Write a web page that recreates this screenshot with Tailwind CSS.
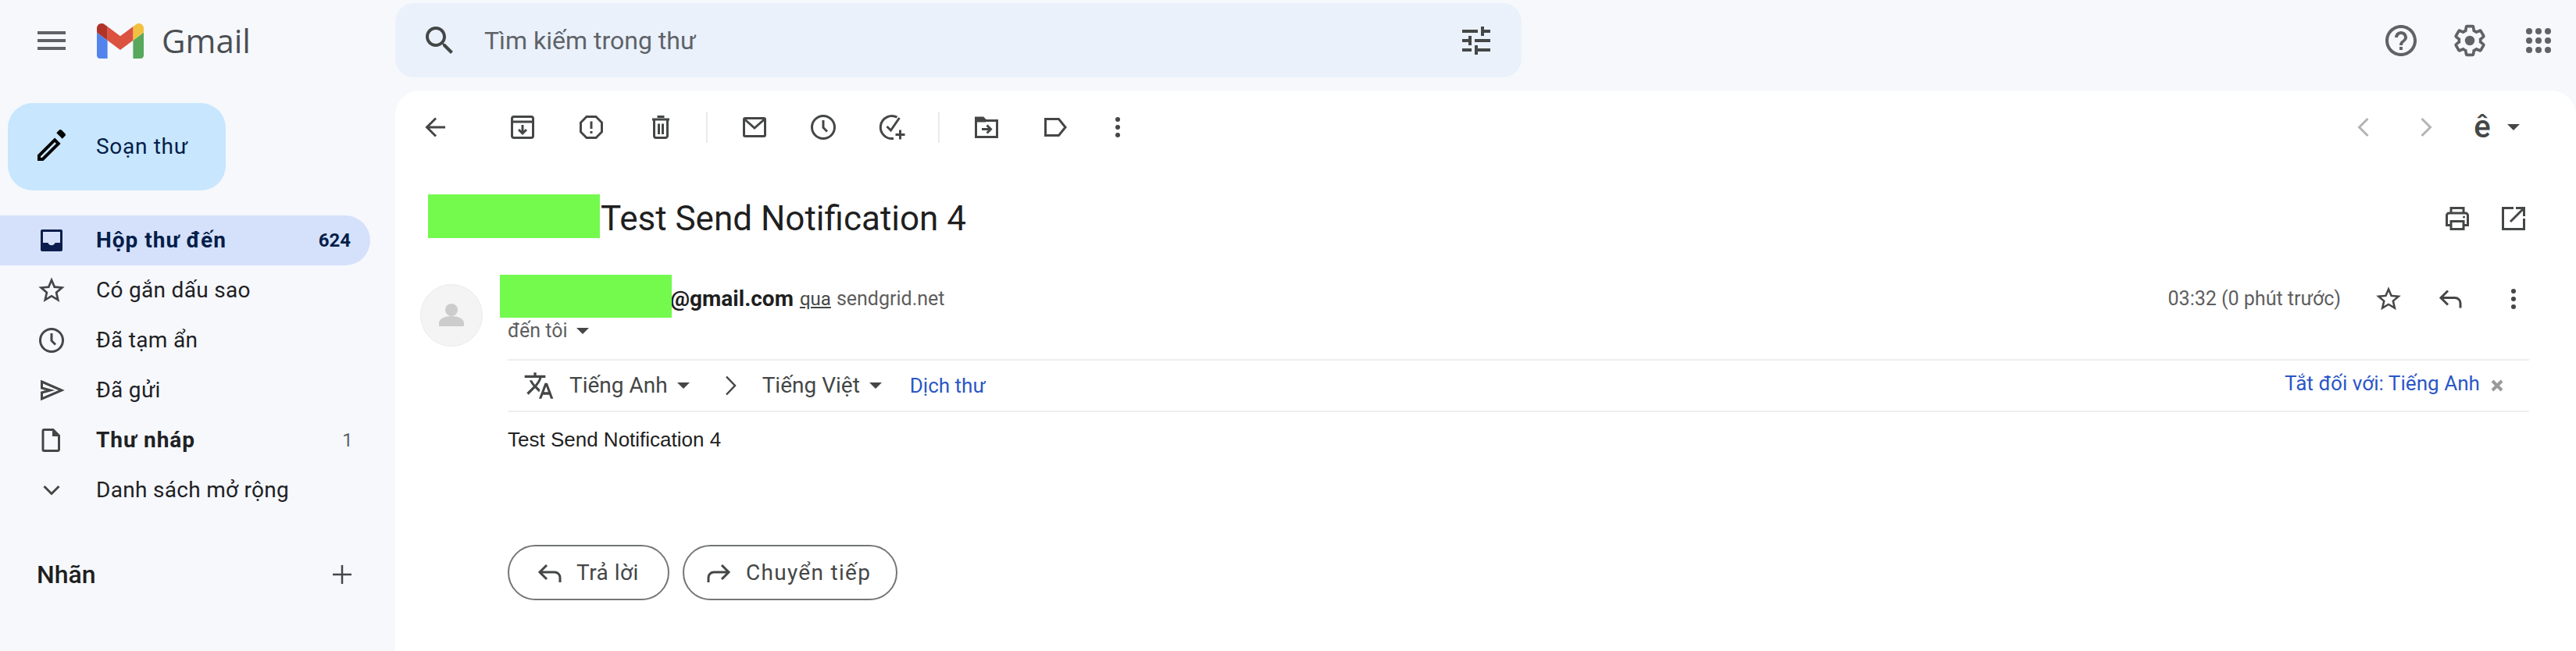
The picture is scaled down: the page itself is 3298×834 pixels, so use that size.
<!DOCTYPE html>
<html lang="vi">
<head>
  <meta charset="UTF-8">
  <title>Gmail</title>
  <script src="https://cdn.jsdelivr.net/npm/@tailwindcss/browser@4"></script>
</head>
<body class="font-['Roboto',sans-serif] bg-[#f6f8fc]">
<div class="flex w-[3298px] h-[834px] overflow-hidden text-[#1f1f1f]">

  <!-- Sidebar -->
  <aside class="w-[506px] shrink-0">
    <div class="h-[116px] flex items-center pl-[42px] pb-[12px]">
      <svg class="size-12 text-[#5f6368]" viewBox="0 0 24 24" fill="currentColor"><path d="M3 18h18v-2H3v2zm0-5h18v-2H3v2zm0-7v2h18V6H3z"/></svg>
      <svg class="ml-[34px] w-[60px] h-[45px]" viewBox="52 42 88 66"><path fill="#5384ed" d="M58 108h14V74L52 59v43c0 3.32 2.69 6 6 6"/><path fill="#57a85c" d="M120 108h14c3.32 0 6-2.69 6-6V59l-20 15"/><path fill="#f2c040" d="M120 48v26l20-15v-8c0-7.42-8.47-11.65-14.4-7.2"/><path fill="#dc5241" d="M72 74V48l24 18 24-18v26L96 92"/><path fill="#b03327" d="M52 51v8l20 15V48l-5.6-4.2c-5.94-4.45-14.4-.22-14.4 7.2"/></svg>
      <span class="ml-[23px] text-[42px] leading-none text-[#4b4e52] font-['Open_Sans']">Gmail</span>
    </div>

    <button class="ml-[10px] mt-[16px] w-[279px] h-[112px] rounded-[32px] bg-[#c8e6fd] flex items-center pl-[32px]">
      <svg class="size-12" viewBox="0 0 24 24" fill="#000"><path d="M3 17.25V21h3.75L17.81 9.94l-3.75-3.75L3 17.25zM5.92 19H5v-.92l9.06-9.06.92.92L5.92 19zM20.71 5.04c.39-.39.39-1.02 0-1.41l-2.34-2.34c-.2-.2-.45-.29-.71-.29s-.51.1-.7.29l-1.83 1.83 3.75 3.75 1.83-1.83z"/></svg>
      <span class="ml-[33px] text-[28px] tracking-[0.7px] text-[#041e49]">Soạn thư</span>
    </button>

    <nav class="mt-[32px] text-[28px] text-[#202124] tracking-[0.3px]">
      <div class="w-[474px] h-16 rounded-r-[32px] bg-[#d5e1fb] flex items-center pl-[46px] pr-[25px] font-bold text-[#041e49]">
        <svg class="size-10" viewBox="0 0 20 20" fill="#0b1d4d"><path fill-rule="evenodd" d="M4 3h12a1 1 0 011 1v12a1 1 0 01-1 1H4a1 1 0 01-1-1V4a1 1 0 011-1zm.5 1.5v7h3.2c.3 1 1.2 1.6 2.3 1.6s2-.6 2.3-1.6h3.2v-7z"/></svg>
        <span class="ml-[37px] tracking-[1px]">Hộp thư đến</span>
        <span class="ml-auto text-[24px] tracking-normal">624</span>
      </div>
      <div class="w-[474px] h-16 flex items-center pl-[46px] pr-[25px]">
        <svg class="size-10" viewBox="0 0 24 24" fill="#444746"><path d="M22 9.24l-7.19-.62L12 2 9.19 8.63 2 9.24l5.46 4.73L5.82 21 12 17.27 18.18 21l-1.63-7.03L22 9.24zM12 15.4l-3.76 2.27 1-4.28-3.32-2.88 4.38-.38L12 6.1l1.71 4.04 4.38.38-3.32 2.88 1 4.28L12 15.4z"/></svg>
        <span class="ml-[37px]">Có gắn dấu sao</span>
      </div>
      <div class="w-[474px] h-16 flex items-center pl-[46px] pr-[25px]">
        <svg class="size-10" viewBox="0 0 20 20" fill="none" stroke="#444746" stroke-width="1.5"><circle cx="10" cy="10" r="7.25"/><path d="M10 5.5v4.75l2.5 2.5"/></svg>
        <span class="ml-[37px]">Đã tạm ẩn</span>
      </div>
      <div class="w-[474px] h-16 flex items-center pl-[46px] pr-[25px]">
        <svg class="size-10" viewBox="0 0 20 20" fill="none" stroke="#444746" stroke-width="1.5"><path d="M3.75 4.5L16.5 10 3.75 15.5v-4l5.5-1.5-5.5-1.5z"/></svg>
        <span class="ml-[37px]">Đã gửi</span>
      </div>
      <div class="w-[474px] h-16 flex items-center pl-[46px] pr-[25px]">
        <svg class="size-10" viewBox="0 0 20 20" fill="none" stroke="#444746" stroke-width="1.5"><path d="M5.25 3.25h5.75l3.75 3.75v9a.75.75 0 01-.75.75H5.25a.75.75 0 01-.75-.75V4a.75.75 0 01.75-.75z"/><path fill="#444746" stroke="none" d="M10.5 3.5h1l3 3v1h-4z"/></svg>
        <span class="ml-[37px] font-bold tracking-[1px]">Thư nháp</span>
        <span class="ml-auto -mr-[3px] text-[24px] text-[#5f6368]">1</span>
      </div>
      <div class="w-[474px] h-16 flex items-center pl-[46px] pr-[25px]">
        <svg class="size-10" viewBox="0 0 20 20" fill="none" stroke="#444746" stroke-width="1.5"><path d="M5.25 7.5L10 12.25l4.75-4.75"/></svg>
        <span class="ml-[37px]">Danh sách mở rộng</span>
      </div>
    </nav>

    <div class="w-[474px] h-16 mt-[44px] flex items-center pl-[47px] pr-[16px]">
      <span class="text-[32px] font-medium">Nhãn</span>
      <svg class="ml-auto size-10" viewBox="0 0 20 20" fill="none" stroke="#444746" stroke-width="1.25"><path d="M10 4v12M4 10h12"/></svg>
    </div>
  </aside>

  <!-- Main column -->
  <main class="flex-1 min-w-0 flex flex-col">
    <header class="h-[116px] shrink-0 flex items-start pt-1 pr-[4px]">
      <div class="w-[1442px] h-[95px] rounded-[24px] bg-[#eaf1fb] flex items-center pl-[33px] pr-[34px]">
        <svg class="size-12" viewBox="0 0 24 24" fill="#444746"><path d="M15.5 14h-.79l-.28-.27C15.41 12.59 16 11.11 16 9.5 16 5.91 13.09 3 9.5 3S3 5.91 3 9.5 5.91 16 9.5 16c1.61 0 3.09-.59 4.23-1.57l.27.28v.79l5 4.99L20.49 19l-4.99-5zm-6 0C7.01 14 5 11.99 5 9.5S7.01 5 9.5 5 14 7.01 14 9.5 11.99 14 9.5 14z"/></svg>
        <span class="ml-[33px] text-[32px] text-[#5f6368]">Tìm kiếm trong thư</span>
        <svg class="ml-auto size-12" viewBox="0 0 24 24" fill="#444746"><path d="M3 17v2h6v-2H3zM3 5v2h10V5H3zm10 16v-2h8v-2h-8v-2h-2v6h2zM7 9v2H3v2h4v2h2V9H7zm14 4v-2H11v2h10zm-6-4h2V7h4V5h-4V3h-2v6z"/></svg>
      </div>
      <div class="ml-auto h-[95px] flex items-center">
        <div class="w-[88px] flex justify-center"><svg class="size-12" viewBox="0 0 24 24" fill="#5f6368"><path d="M11 18h2v-2h-2v2zm1-16C6.48 2 2 6.48 2 12s4.48 10 10 10 10-4.48 10-10S17.52 2 12 2zm0 18c-4.41 0-8-3.59-8-8s3.59-8 8-8 8 3.59 8 8-3.59 8-8 8zm0-14c-2.21 0-4 1.79-4 4h2c0-1.1.9-2 2-2s2 .9 2 2c0 2-3 1.75-3 5h2c0-2.25 3-2.5 3-5 0-2.21-1.79-4-4-4z"/></svg></div>
        <div class="w-[88px] flex justify-center"><svg class="size-[44px]" viewBox="0 0 24 24" fill="none" stroke="#5f6368" stroke-width="2"><path d="M19.43 12.98c.04-.32.07-.64.07-.98s-.03-.66-.07-.98l2.11-1.65c.19-.15.24-.42.12-.64l-2-3.46c-.12-.22-.39-.3-.61-.22l-2.49 1c-.52-.4-1.08-.73-1.69-.98l-.38-2.65C14.46 2.18 14.25 2 14 2h-4c-.25 0-.46.18-.49.42l-.38 2.65c-.61.25-1.17.59-1.69.98l-2.49-1c-.23-.09-.49 0-.61.22l-2 3.46c-.13.22-.07.49.12.64l2.11 1.65c-.04.32-.07.65-.07.98s.03.66.07.98l-2.11 1.65c-.19.15-.24.42-.12.64l2 3.46c.12.22.39.3.61.22l2.49-1c.52.4 1.08.73 1.69.98l.38 2.65c.03.24.24.42.49.42h4c.25 0 .46-.18.49-.42l.38-2.65c.61-.25 1.17-.59 1.69-.98l2.49 1c.23.09.49 0 .61-.22l2-3.46c.12-.22.07-.49-.12-.64l-2.11-1.65z"/><circle cx="12" cy="12" r="3.4" fill="#5f6368" stroke="none"/></svg></div>
        <div class="w-[88px] flex justify-center"><svg class="size-12" viewBox="0 0 48 48" fill="#5f6368"><circle cx="12" cy="12" r="4"/><circle cx="24" cy="12" r="4"/><circle cx="36" cy="12" r="4"/><circle cx="12" cy="24" r="4"/><circle cx="24" cy="24" r="4"/><circle cx="36" cy="24" r="4"/><circle cx="12" cy="36" r="4"/><circle cx="24" cy="36" r="4"/><circle cx="36" cy="36" r="4"/></svg></div>
      </div>
    </header>

    <section class="flex-1 bg-white rounded-t-[32px]">
      <!-- Toolbar -->
      <div class="h-[94px] flex items-center pl-[8px] pr-[72px]">
        <div class="w-[88px] flex justify-center"><svg class="size-10" viewBox="0 0 20 20" fill="none" stroke="#444746" stroke-width="1.5"><path d="M16 10H4.75M10 4.25L4.25 10 10 15.75"/></svg></div>
        <div class="w-[88px] ml-[23px] flex justify-center"><svg class="size-10" viewBox="0 0 20 20" fill="none" stroke="#444746" stroke-width="1.5"><rect x="3.25" y="3.25" width="13.5" height="13.5" rx="1.25"/><path d="M3.25 6.5h13.5M10 8.5v5.25M7.5 11.5l2.5 2.5 2.5-2.5"/></svg></div>
        <div class="w-[88px] flex justify-center"><svg class="size-10" viewBox="0 0 20 20" fill="none" stroke="#444746" stroke-width="1.5"><path d="M7 3.25h6L16.75 7v6L13 16.75H7L3.25 13V7z"/><path d="M10 6.25v4.75M10 12.5v1.5"/></svg></div>
        <div class="w-[88px] ml-[1px] flex justify-center"><svg class="size-10" viewBox="0 0 20 20" fill="none" stroke="#444746" stroke-width="1.5"><path d="M5.75 5.5v10a1.25 1.25 0 001.25 1.25h6a1.25 1.25 0 001.25-1.25v-10M4.5 5h11M7.75 3.25h4.5M8.75 7.75v6.75M11.25 7.75v6.75"/></svg></div>
        <div class="w-[2px] h-10 ml-[14px] bg-[#e8eaed]"></div>
        <div class="w-[88px] ml-[16px] flex justify-center"><svg class="size-10" viewBox="0 0 20 20" fill="none" stroke="#444746" stroke-width="1.5"><rect x="3.25" y="4.25" width="13.5" height="11.5" rx=".75"/><path d="M3.5 4.75L10 10.5l6.5-5.75"/></svg></div>
        <div class="w-[88px] flex justify-center"><svg class="size-10" viewBox="0 0 20 20" fill="none" stroke="#444746" stroke-width="1.5"><circle cx="10" cy="10" r="7.25"/><path d="M10 5.5v4.75l2.5 2.5"/></svg></div>
        <div class="w-[88px] flex justify-center"><svg class="size-10" viewBox="0 0 20 20" fill="none" stroke="#444746" stroke-width="1.5"><path d="M13.25 3.6A7.25 7.25 0 1 0 11 17.2M6.75 9.5l2.5 2.5 5.5-8M15.25 11.75v6M12.25 14.75h6"/></svg></div>
        <div class="w-[2px] h-10 ml-[15px] bg-[#e8eaed]"></div>
        <div class="w-[88px] ml-[16px] flex justify-center"><svg class="size-10" viewBox="0 0 20 20" fill="none" stroke="#444746" stroke-width="1.5"><path d="M3.25 16.25V4h4.5l1.75 1.75h7.25v10.5z"/><path fill="#444746" stroke="none" d="M3.25 4h4.5l1.75 1.75v1H3.25z"/><path d="M7 11.25h5.75M10.25 8.75l2.5 2.5-2.5 2.5"/></svg></div>
        <div class="w-[88px] flex justify-center"><svg class="size-10" viewBox="0 0 20 20" fill="none" stroke="#444746" stroke-width="1.5"><path d="M3.75 4.75h8.5L16.5 10l-4.25 5.25h-8.5z"/></svg></div>
        <div class="w-[72px] flex justify-center"><svg class="size-10" viewBox="0 0 20 20" fill="#444746"><circle cx="10" cy="5" r="1.5"/><circle cx="10" cy="10" r="1.5"/><circle cx="10" cy="15" r="1.5"/></svg></div>

        <div class="ml-auto w-[80px] flex justify-center"><svg class="size-10" viewBox="0 0 20 20" fill="none" stroke="#b4b4b4" stroke-width="1.5"><path d="M12.75 4.5L7.25 10l5.5 5.5"/></svg></div>
        <div class="w-[80px] flex justify-center"><svg class="size-10" viewBox="0 0 20 20" fill="none" stroke="#b4b4b4" stroke-width="1.5"><path d="M7.25 4.5l5.5 5.5-5.5 5.5"/></svg></div>
        <div class="w-[64px] flex justify-center text-[40px] leading-none font-medium text-[#444746]">ê</div>
        <svg class="w-4 h-2" viewBox="0 0 16 8" fill="#444746"><path d="M0 0h16L8 8z"/></svg>
      </div>

      <!-- Subject -->
      <div class="h-[140px] flex items-center pl-[42px] pr-[44px]">
        <div class="w-[220px] h-[56px] mb-[6px] bg-[#74f94d]"></div>
        <h1 class="ml-[1px] text-[44px] text-[#1f1f1f]">Test Send Notification 4</h1>
        <div class="ml-auto w-[72px] flex justify-center"><svg class="size-10" viewBox="0 0 20 20" fill="none" stroke="#444746" stroke-width="1.5"><path d="M6 6.5V3.25h8V6.5M6 14.25H3.25V8a1.5 1.5 0 011.5-1.5h10.5a1.5 1.5 0 011.5 1.5v6.25H14"/><path d="M6 11.75h8v5H6z"/><circle cx="14.25" cy="9" r=".75" fill="#444746" stroke="none"/></svg></div>
        <div class="w-[72px] flex justify-center"><svg class="size-10" viewBox="0 0 20 20" fill="none" stroke="#444746" stroke-width="1.5"><path d="M10 3.25H3.25v13.5h13.5V10M11.5 3.25h5.25V8.5M16.5 3.5L8 12"/></svg></div>
      </div>

      <!-- Message -->
      <div class="flex pl-[32px] pr-[60px]">
        <div class="size-20 mt-[14px] shrink-0 rounded-full bg-[#f4f4f4] border border-[#ebebeb] flex items-center justify-center">
          <svg class="size-10" viewBox="0 0 40 40" fill="#cccccc"><circle cx="20" cy="13" r="8"/><path d="M4 34v-4c0-6 8-9 16-9s16 3 16 9v4z"/></svg>
        </div>
        <div class="flex-1 ml-[32px] pt-[8px] min-w-0">
          <div class="relative h-[50px] flex items-center pl-[208px]">
            <div class="absolute left-[-10px] top-[-6px] w-[220px] h-[55px] bg-[#74f94d]"></div>
            <span class="text-[28px] font-bold">@gmail.com</span>
            <span class="ml-[8px] text-[24px] text-[#444746] underline">qua</span>
            <span class="ml-[7px] text-[25px] text-[#5e5e5e]">sendgrid.net</span>
            <span class="ml-auto mr-[21px] text-[25px] text-[#5e5e5e]">03:32 (0 phút trước)</span>
            <div class="w-[80px] flex justify-center"><svg class="size-[38px]" viewBox="0 0 24 24" fill="#444746"><path d="M22 9.24l-7.19-.62L12 2 9.19 8.63 2 9.24l5.46 4.73L5.82 21 12 17.27 18.18 21l-1.63-7.03L22 9.24zM12 15.4l-3.76 2.27 1-4.28-3.32-2.88 4.38-.38L12 6.1l1.71 4.04 4.38.38-3.32 2.88 1 4.28L12 15.4z"/></svg></div>
            <div class="w-[80px] flex justify-center"><svg class="size-10" viewBox="0 0 20 20" fill="none" stroke="#444746" stroke-width="1.5"><path d="M8 4.75L3.5 9.25 8 13.75M4 9.25h8.5a3.5 3.5 0 013.5 3.5v3"/></svg></div>
            <div class="w-[80px] -mr-[20px] flex justify-center"><svg class="size-10" viewBox="0 0 20 20" fill="#444746"><circle cx="10" cy="5" r="1.5"/><circle cx="10" cy="10" r="1.5"/><circle cx="10" cy="15" r="1.5"/></svg></div>
          </div>
          <div class="h-8 flex items-center text-[25px] text-[#5e5e5e]">
            đến tôi
            <svg class="ml-[12px] w-4 h-2" viewBox="0 0 16 8" fill="#444746"><path d="M0 0h16L8 8z"/></svg>
          </div>

          <!-- Translate bar -->
          <div class="mt-[20px] h-[68px] border-y-2 border-[#eeeeee] flex items-center pl-[20px] pr-[33px] text-[28px] text-[#444746]">
            <svg class="size-10" viewBox="0 0 24 24" fill="#444746"><path d="M12.87 15.07l-2.54-2.51.03-.03c1.74-1.94 2.98-4.17 3.71-6.53H17V4h-7V2H8v2H1v1.99h11.17C11.5 7.92 10.44 9.75 9 11.35 8.07 10.32 7.3 9.19 6.69 8h-2c.73 1.63 1.73 3.17 2.98 4.56l-5.09 5.02L4 19l5-5 3.11 3.11.76-2.04zM18.5 10h-2L12 22h2l1.12-3h4.75L21 22h2l-4.5-12zm-2.62 7l1.62-4.33L19.12 17h-3.24z"/></svg>
            <span class="ml-[19px]">Tiếng Anh</span>
            <svg class="ml-[12px] w-4 h-2" viewBox="0 0 16 8" fill="#444746"><path d="M0 0h16L8 8z"/></svg>
            <svg class="ml-[45px] w-[15px] h-[26px]" viewBox="0 0 15 26" fill="none" stroke="#444746" stroke-width="2.5"><path d="M2 1.5L13 13 2 24.5"/></svg>
            <span class="ml-[33px]">Tiếng Việt</span>
            <svg class="ml-[12px] w-4 h-2" viewBox="0 0 16 8" fill="#444746"><path d="M0 0h16L8 8z"/></svg>
            <span class="ml-[36px] text-[26px] text-[#2a56c6]">Dịch thư</span>
            <span class="ml-auto mb-[6px] text-[26px] tracking-[0.05px] text-[#2a56c6]">Tắt đối với: Tiếng Anh</span>
            <svg class="ml-[14px] size-4" viewBox="0 0 16 16" fill="none" stroke="#999" stroke-width="4"><path d="M2 2l12 12M14 2L2 14"/></svg>
          </div>

          <p class="mt-[20px] h-[30px] leading-[30px] text-[26px] font-['Liberation_Sans'] text-[#222222]">Test Send Notification 4</p>

          <!-- Actions -->
          <div class="mt-[120px] flex gap-[17px] text-[28px] text-[#444746]">
            <button class="w-[207px] h-[71px] rounded-full border-2 border-[#747775] flex items-center pl-[36px]">
              <svg class="size-8" viewBox="0 0 16 16" fill="none" stroke="#444746" stroke-width="1.5"><path d="M6 3L1.5 7.5 6 12M2 7.5h9a3.5 3.5 0 013.5 3.5v3"/></svg>
              <span class="ml-[18px] tracking-[0.5px]">Trả lời</span>
            </button>
            <button class="w-[275px] h-[71px] rounded-full border-2 border-[#747775] flex items-center pl-[28px]">
              <svg class="size-8" viewBox="0 0 16 16" fill="none" stroke="#444746" stroke-width="1.5"><path d="M10 3l4.5 4.5L10 12M14 7.5H5A3.5 3.5 0 001.5 11v3"/></svg>
              <span class="ml-[19px] tracking-[1.3px]">Chuyển tiếp</span>
            </button>
          </div>
        </div>
      </div>
    </section>
  </main>
</div>
</body>
</html>
